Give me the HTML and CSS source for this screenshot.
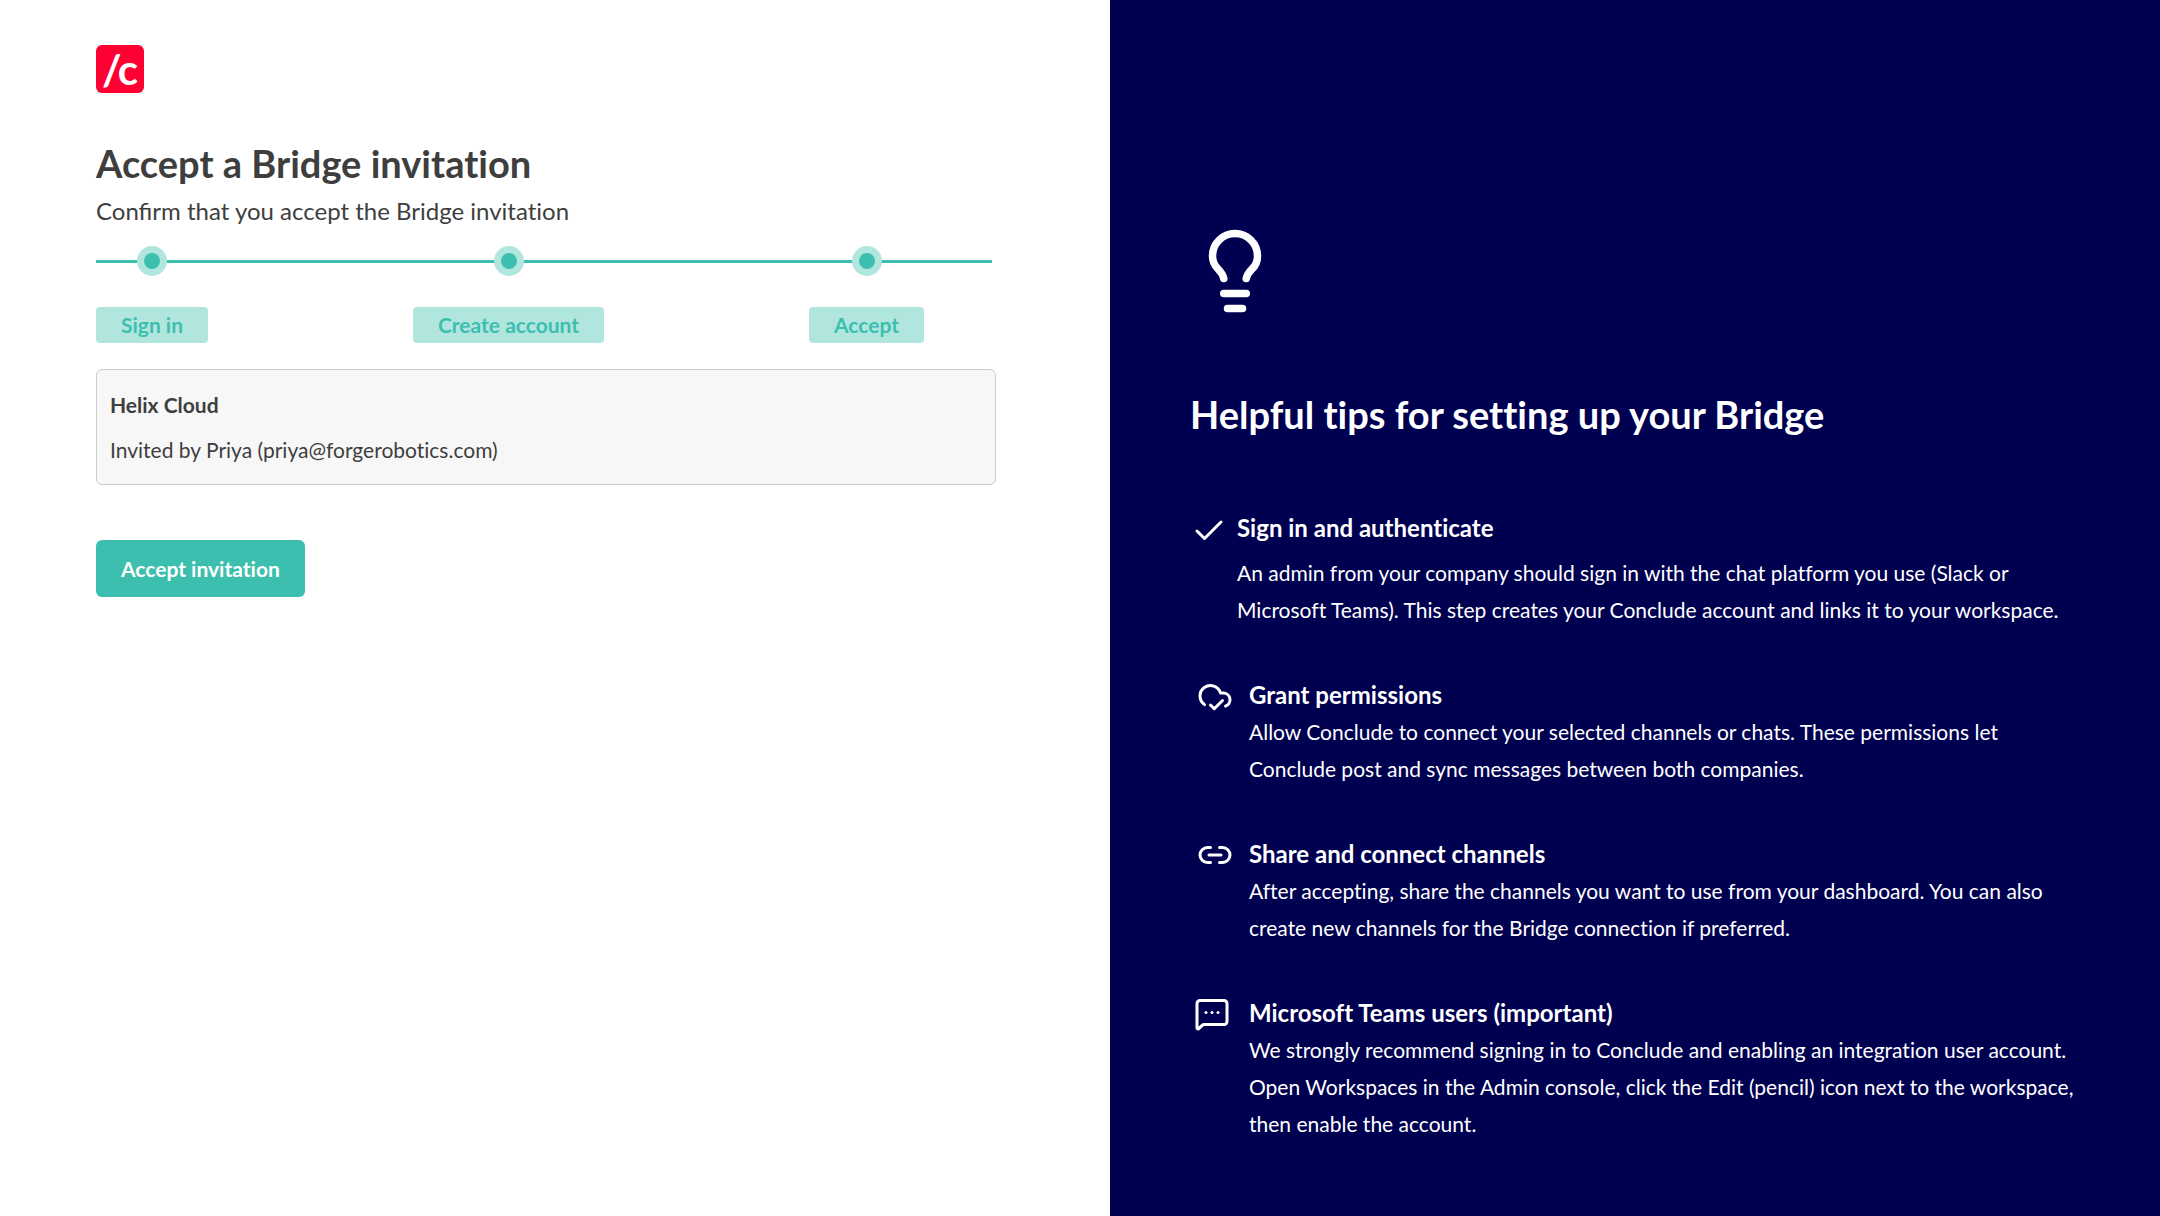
FILE: index.html
```html
<!DOCTYPE html>
<html lang="en">
<head>
<meta charset="utf-8">
<meta name="viewport" content="width=device-width, initial-scale=1">
<title>Accept a Bridge invitation</title>
<link rel="stylesheet" href="styles.css">
</head>
<body>
<div class="page">
  <main class="invite">
    <div class="logo">/<span class="logo-c">c</span></div>
    <h1 class="invite-title">Accept a Bridge invitation</h1>
    <p class="invite-subtitle"><span class="ligatures">Confirm</span> that you accept the Bridge invitation</p>

    <ol class="stepper">
      <li class="step"><span class="step-dot"></span><span class="step-label">Sign in</span></li>
      <li class="step"><span class="step-dot"></span><span class="step-label">Create account</span></li>
      <li class="step"><span class="step-dot"></span><span class="step-label">Accept</span></li>
    </ol>

    <section class="company">
      <h2 class="company-name">Helix Cloud</h2>
      <p class="company-host">Invited by Priya (priya@forgerobotics.com)</p>
    </section>

    <button class="accept" type="button">Accept invitation</button>
  </main>

  <aside class="tips">
    <svg class="bulb" viewBox="0 0 24 24" aria-hidden="true"><path d="M15 14c.2-1 .7-1.7 1.5-2.5 1-.9 1.5-2.2 1.5-3.5A6 6 0 0 0 6 8c0 1 .2 2.2 1.5 3.5.7.7 1.3 1.5 1.5 2.5"/><path d="M9 18h6"/><path d="M10 22h4"/></svg>
    <h2 class="tips-title">Helpful tips for setting up your Bridge</h2>
    <ul class="tip-list">
      <li class="tip tip-lead">
        <svg class="tip-icon" viewBox="0 0 24 24" aria-hidden="true"><path d="M20 6 9 17l-5-5"/></svg>
        <div class="tip-text">
          <h3 class="tip-title">Sign in and authenticate</h3>
          <p class="tip-body">An admin from your company should sign in with the chat platform you use (Slack or Microsoft Teams). This step creates your Conclude account and links it to your workspace.</p>
        </div>
      </li>
      <li class="tip">
        <svg class="tip-icon" viewBox="0 0 24 24" aria-hidden="true"><path d="m17 15-5.500 5.500L9 18"/><path d="M5 17.743A7 7 0 1 1 15.710 10h1.790a4.500 4.500 0 0 1 1.500 8.742"/></svg>
        <div class="tip-text">
          <h3 class="tip-title">Grant permissions</h3>
          <p class="tip-body">Allow Conclude to connect your selected channels or chats. These permissions let Conclude post and sync messages between both companies.</p>
        </div>
      </li>
      <li class="tip">
        <svg class="tip-icon" viewBox="0 0 24 24" aria-hidden="true"><path d="M9 17H7A5 5 0 0 1 7 7h2"/><path d="M15 7h2a5 5 0 1 1 0 10h-2"/><path d="M8 12h8"/></svg>
        <div class="tip-text">
          <h3 class="tip-title">Share and connect channels</h3>
          <p class="tip-body">After accepting, share the channels you want to use from your dashboard. You can also create new channels for the Bridge connection if preferred.</p>
        </div>
      </li>
      <li class="tip tip-teams">
        <svg class="tip-icon" viewBox="0 0 24 24" aria-hidden="true"><path d="M22 17a2 2 0 0 1-2 2H6.828a2 2 0 0 0-1.414.586l-2.202 2.202A.71.71 0 0 1 2 21.286V5a2 2 0 0 1 2-2h16a2 2 0 0 1 2 2z"/><path d="M12 11h.01"/><path d="M16 11h.01"/><path d="M8 11h.01"/></svg>
        <div class="tip-text">
          <h3 class="tip-title">Microsoft Teams users (important)</h3>
          <p class="tip-body">We strongly recommend signing in to Conclude and enabling an integration user account. Open Workspaces in the Admin console, click the Edit (pencil) icon next to the workspace, then enable the account.</p>
        </div>
      </li>
    </ul>
  </aside>
</div>
</body>
</html>
```
FILE: styles.css
```css
:root {
  --teal: #3cbfae;
  --teal-light: #b1e6df;
  --navy: #000050;
  --ink: #3e3e3e;
}

* { box-sizing: border-box; }

body {
  margin: 0;
  background: #fff;
  color: var(--ink);
  font-family: Lato, sans-serif;
  font-size: 21px;
  font-variant-ligatures: no-common-ligatures;
}

.ligatures { font-variant-ligatures: common-ligatures; }

h1, h2, h3, p, ol, ul {
  margin: 0;
  padding: 0;
}

ol, ul { list-style: none; }

.page {
  display: grid;
  grid-template-columns: 37fr 35fr;
  min-height: 100vh;
}

/* Invitation column */

.invite {
  padding: 45px 114px 45px 96px;
}

.logo {
  display: flex;
  align-items: center;
  justify-content: center;
  width: 48px;
  height: 48px;
  border-radius: 6px;
  background: #ff0033;
  color: #fff;
  font-size: 42px;
  font-weight: 700;
  line-height: 48px;
}

.logo-c { margin-left: -4px; }

.invite-title {
  margin-top: 40px;
  font-size: 38px;
  font-weight: 700;
  line-height: 60px;
}

.invite-subtitle {
  font-size: 24px;
  line-height: 36px;
}

.stepper {
  position: relative;
  display: flex;
  justify-content: space-between;
  margin-top: 17px;
  padding-right: 72px;
}

/* Track that runs behind the step dots */
.stepper::before {
  content: "";
  position: absolute;
  top: 14px;
  left: 0;
  right: 4px;
  height: 3px;
  background: var(--teal);
}

.step {
  position: relative;
  display: flex;
  flex-direction: column;
  align-items: center;
  gap: 31px;
}

.step-dot {
  width: 30px;
  height: 30px;
  border: 7px solid var(--teal-light);
  border-radius: 50%;
  background: var(--teal);
}

.step-label {
  padding: 0 25px;
  border-radius: 4px;
  background: var(--teal-light);
  color: var(--teal);
  font-weight: 700;
  line-height: 36px;
}

.company {
  margin-top: 26px;
  padding: 12px 13px;
  border: 1px solid #ccc;
  border-radius: 6px;
  background: #f7f7f7;
  line-height: 45px;
}

.company-name {
  font-size: 21px;
  font-weight: 700;
}

.accept {
  display: block;
  margin-top: 55px;
  padding: 0 25px;
  border: 0;
  border-radius: 6px;
  background: var(--teal);
  color: #fff;
  font: 700 21px/57px Lato, sans-serif;
  font-variant-ligatures: inherit;
  cursor: pointer;
}

/* Tips column */

.tips {
  padding: 226px 80px 48px;
  background: var(--navy);
  color: #fff;
}

.bulb,
.tip-icon {
  display: block;
  flex: none;
  fill: none;
  stroke: currentColor;
  stroke-width: 2;
  stroke-linecap: round;
  stroke-linejoin: round;
}

.bulb {
  width: 90px;
  height: 90px;
}

.tips-title {
  margin-top: 70px;
  font-size: 38px;
  font-weight: 700;
  line-height: 57px;
}

.tip-list {
  display: flex;
  flex-direction: column;
  gap: 49px;
  margin-top: 67px;
}

.tip {
  display: flex;
  gap: 16px;
  padding-left: 7px;
}

.tip-icon {
  width: 36px;
  height: 36px;
  margin-top: 1px;
}

.tip-title {
  font-size: 24px;
  font-weight: 700;
  line-height: 36px;
}

.tip-body { line-height: 37px; }

.tip-lead {
  gap: 10px;
  padding-left: 1px;
}

.tip-lead .tip-icon { margin-top: 3px; }

.tip-lead .tip-body { margin-top: 8px; }

.tip-teams {
  gap: 19px;
  padding-left: 4px;
}
```
